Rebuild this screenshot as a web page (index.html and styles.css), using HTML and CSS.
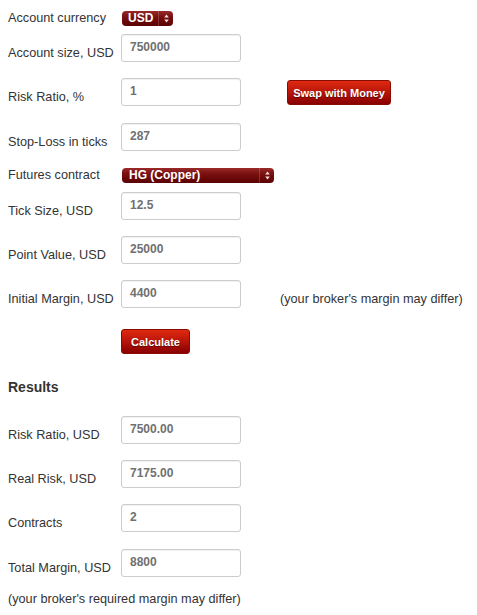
FILE: index.html
```html
<!DOCTYPE html>
<html>
<head>
<meta charset="utf-8">
<link rel="stylesheet" href="styles.css">
</head>
<body>
<div class="calc">
  <div class="row r-sel1">
    <div class="label lab-sel">Account currency</div>
    <div class="select sel-usd"><span class="sel-text">USD</span><span class="sel-arrows"><svg width="5" height="9" viewBox="0 0 5 9"><path d="M2.5 0.5 L4.8 3.5 L0.2 3.5 Z M2.5 8.5 L4.8 5.5 L0.2 5.5 Z" fill="#f2dede"/></svg></span></div>
  </div>
  <div class="row r-in">
    <div class="label">Account size, USD</div>
    <div class="input">750000</div>
  </div>
  <div class="row r-in r45">
    <div class="label">Risk Ratio, %</div>
    <div class="input">1</div>
    <div class="btn btn-swap">Swap with Money</div>
  </div>
  <div class="row r-in r45">
    <div class="label">Stop-Loss in ticks</div>
    <div class="input">287</div>
  </div>
  <div class="row r-sel2">
    <div class="label lab-sel">Futures contract</div>
    <div class="select sel-hg"><span class="sel-text">HG (Copper)</span><span class="sel-arrows"><svg width="5" height="9" viewBox="0 0 5 9"><path d="M2.5 0.5 L4.8 3.5 L0.2 3.5 Z M2.5 8.5 L4.8 5.5 L0.2 5.5 Z" fill="#f2dede"/></svg></span></div>
  </div>
  <div class="row r-in">
    <div class="label">Tick Size, USD</div>
    <div class="input">12.5</div>
  </div>
  <div class="row r-in">
    <div class="label">Point Value, USD</div>
    <div class="input">25000</div>
  </div>
  <div class="row r-in r49">
    <div class="label">Initial Margin, USD</div>
    <div class="input">4400</div>
    <div class="note">(your broker's margin may differ)</div>
  </div>
  <div class="row r-btn">
    <div class="label"></div>
    <div class="btn btn-calc">Calculate</div>
  </div>
  <h3 class="results">Results</h3>
  <div class="row r-in">
    <div class="label">Risk Ratio, USD</div>
    <div class="input">7500.00</div>
  </div>
  <div class="row r-in">
    <div class="label">Real Risk, USD</div>
    <div class="input">7175.00</div>
  </div>
  <div class="row r-in r45">
    <div class="label">Contracts</div>
    <div class="input">2</div>
  </div>
  <div class="row r-in r-last">
    <div class="label">Total Margin, USD</div>
    <div class="input">8800</div>
  </div>
  <p class="footnote">(your broker's required margin may differ)</p>
</div>
</body>
</html>
```

FILE: styles.css
```css
html, body {
  margin: 0;
  padding: 0;
  background: #ffffff;
}
body {
  font-family: "Liberation Sans", Arial, Helvetica, sans-serif;
  font-size: 12.7px;
  color: #333333;
}
.calc {
  padding: 11px 0 0 8px;
}
.row {
  display: flex;
  align-items: flex-start;
}
.label {
  width: 113px;
  flex: none;
  line-height: 16px;
  padding-top: 11px;
  color: #333;
}
.lab-sel {
  padding-top: 0;
  margin-top: -1px;
}
.r-sel1 {
  height: 15px;
  margin-bottom: 8px;
}
.r-sel2 {
  height: 15px;
  margin-bottom: 9px;
}
.r-in {
  height: 28px;
  margin-bottom: 16px;
}
.r45 {
  margin-bottom: 17px;
}
.r49 {
  margin-bottom: 21px;
}
.r-last {
  margin-bottom: 14px;
}
.input {
  width: 110px;
  height: 26px;
  box-sizing: content-box;
  border: 1px solid #cccccc;
  border-radius: 3px;
  background: #fff;
  box-shadow: inset 0 1px 1px rgba(0,0,0,0.06);
  font-size: 12px;
  font-weight: bold;
  color: #707070;
  line-height: 25px;
  padding: 0 0 0 8px;
}
.select {
  display: flex;
  align-items: center;
  height: 15px;
  border-radius: 4px;
  background: linear-gradient(#9a2a2a 0%, #7c1212 35%, #6a0707 70%, #5a0404 100%);
  color: #fff;
  font-size: 12px;
  font-weight: bold;
  margin-left: 1px;
  box-sizing: border-box;
  overflow: hidden;
}
.sel-usd {
  width: 51px;
}
.sel-hg {
  width: 152px;
}
.sel-text {
  flex: 1;
  padding-left: 6px;
  line-height: 15px;
}
.sel-hg .sel-text {
  padding-left: 7px;
}
.sel-arrows {
  width: 14px;
  height: 15px;
  display: flex;
  align-items: center;
  justify-content: center;
  border-left: 1px solid rgba(255,255,255,0.18);
}
.btn {
  display: flex;
  align-items: center;
  justify-content: center;
  height: 25px;
  box-sizing: border-box;
  border-radius: 3px;
  background: linear-gradient(#de2a10 0%, #b8140a 50%, #880000 100%);
  border: 1px solid #8a0a00;
  color: #ffffff;
  font-size: 11px;
  font-weight: bold;
  text-shadow: 0 1px 1px rgba(0,0,0,0.45);
}
.btn-swap {
  width: 104px;
  margin-left: 46px;
  margin-top: 2px;
}
.btn-calc {
  width: 69px;
}
.r-btn {
  height: 25px;
  margin-bottom: 24px;
}
.note {
  margin-left: 39px;
  padding-top: 11px;
  line-height: 16px;
  color: #333;
}
.results {
  margin: 0 0 20px 0;
  font-size: 14px;
  font-weight: bold;
  line-height: 18px;
  color: #333;
}
.footnote {
  margin: 0;
  line-height: 16px;
}
```
